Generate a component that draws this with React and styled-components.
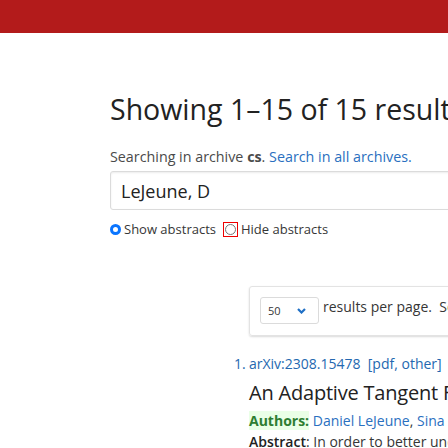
import React, { useState } from 'react';
import styled, { createGlobalStyle } from 'styled-components';

const GlobalStyle = createGlobalStyle`
  body {
    margin: 0;
    font-family: "Open Sans", "Noto Sans", sans-serif;
    color: #363636;
    background: #fff;
    overflow: hidden;
  }
`;

const TopBar = styled.div`
  height: 33px;
  background: #b31b1b;
`;

const Page = styled.main`
  width: 448px;
  overflow: hidden;
  padding-left: 110px;
  box-sizing: border-box;
`;

const Title = styled.h1`
  margin: 58px 0 0;
  font-size: 28.5px;
  font-weight: 400;
  line-height: 36px;
  color: #222;
  white-space: nowrap;
`;

const SearchNote = styled.p`
  margin: 20px 0 0;
  font-size: 14.3px;
  line-height: 20px;
  white-space: nowrap;
  color: #4a4a4a;
`;

const Link = styled.a`
  color: ${(p) => p.color || '#2a6fc0'};
  text-decoration: none;
`;

const SearchInput = styled.input`
  display: block;
  margin-top: 4px;
  width: 400px;
  height: 39px;
  box-sizing: border-box;
  border: 1px solid #dbdbdb;
  border-radius: 3px;
  padding: 0 10px;
  font-family: "Open Sans", sans-serif;
  font-size: 18px;
  color: #222;
  box-shadow: inset 0 1px 2px rgba(10, 10, 10, 0.08);
`;

const RadioRow = styled.div`
  display: flex;
  align-items: center;
  gap: 9px;
  margin-top: 10px;
  font-size: 13px;
  color: #363636;
  white-space: nowrap;
`;

const RadioLabel = styled.label`
  display: flex;
  align-items: center;
  gap: 3px;
`;

const FocusRing = styled.span`
  display: flex;
  align-items: center;
  justify-content: center;
  width: 15px;
  height: 15px;
  box-sizing: border-box;
  border: 1px solid #e00;
  margin-left: -2px;
`;

const Dot = styled.span`
  width: 11px;
  height: 11px;
  border-radius: 50%;
  box-sizing: border-box;
  border: ${(p) => (p.checked ? '3px solid #0a75ff' : '1px solid #767676')};
  background: #fff;
`;

const PagerBox = styled.div`
  margin: 48px 0 0 139px;
  width: 300px;
  height: 50px;
  box-sizing: border-box;
  border: 1px solid #e3e3e3;
  border-radius: 3px;
  box-shadow: 0 1px 2px rgba(10, 10, 10, 0.15);
  padding: 10px 10px;
  display: flex;
  align-items: flex-start;
  gap: 4px;
  font-size: 14px;
  white-space: nowrap;
`;

const Select = styled.div`
  width: 59px;
  height: 27px;
  box-sizing: border-box;
  border: 1px solid #dbdbdb;
  border-radius: 3px;
  display: flex;
  align-items: center;
  justify-content: space-between;
  padding: 0 12px 0 7px;
  font-size: 11px;
  color: #363636;
`;

const PagerText = styled.span`
  line-height: 20px;
`;

const Results = styled.ol`
  margin: 18px 0 0 124px;
  padding: 0 0 0 15px;
  list-style: none;
`;

const Hit = styled.li`
  position: relative;
  font-size: 14px;
`;

const Num = styled.span`
  position: absolute;
  left: -15px;
  color: #2468b0;
`;

const Meta = styled.p`
  margin: 0;
  line-height: 20px;
  white-space: nowrap;
  color: #2468b0;
`;

const HitTitle = styled.p`
  margin: 6px 0 0;
  font-size: 20px;
  line-height: 26px;
  letter-spacing: -0.2px;
  color: #222;
  white-space: nowrap;
`;

const Authors = styled.p`
  margin: 5px 0 0;
  line-height: 20px;
  white-space: nowrap;
`;

const AuthLabel = styled.span`
  font-weight: 700;
  color: #2e7d32;
  background: #eaffe7;
`;

const Abstract = styled.p`
  margin: 1px 0 0;
  line-height: 20px;
  white-space: nowrap;
  color: #363636;
`;

const AbsLabel = styled.span`
  font-weight: 600;
  color: #222;
`;

const Chevron = () => (
  <svg width="9" height="6" viewBox="0 0 9 6">
    <path d="M1 1l3.5 3.5L8 1" fill="none" stroke="#1f6fc5" strokeWidth="2.2" />
  </svg>
);

export default function App() {
  const [query, setQuery] = useState('LeJeune, D');
  return (
    <>
      <GlobalStyle />
      <TopBar />
      <Page>
        <Title>Showing 1–15 of 15 results</Title>
        <SearchNote>
          Searching in archive <strong>cs</strong>. <Link>Search in all archives.</Link>
        </SearchNote>
        <SearchInput value={query} onChange={(e) => setQuery(e.target.value)} />
        <RadioRow>
          <RadioLabel><Dot checked />Show abstracts</RadioLabel>
          <RadioLabel><FocusRing><Dot /></FocusRing>Hide abstracts</RadioLabel>
        </RadioRow>
        <PagerBox>
          <Select>50<Chevron /></Select>
          <PagerText>results per page. &nbsp;Sort results by</PagerText>
        </PagerBox>
        <Results>
          <Hit>
            <Num>1.</Num>
            <Meta>arXiv:2308.15478 &nbsp;[pdf, other]</Meta>
            <HitTitle>An Adaptive Tangent Feature Perspective</HitTitle>
            <Authors>
              <AuthLabel>Authors:</AuthLabel> <Link>Daniel LeJeune</Link>, <Link>Sina Alemohammad</Link>
            </Authors>
            <Abstract><AbsLabel>Abstract</AbsLabel>: In order to better understand</Abstract>
          </Hit>
        </Results>
      </Page>
    </>
  );
}
